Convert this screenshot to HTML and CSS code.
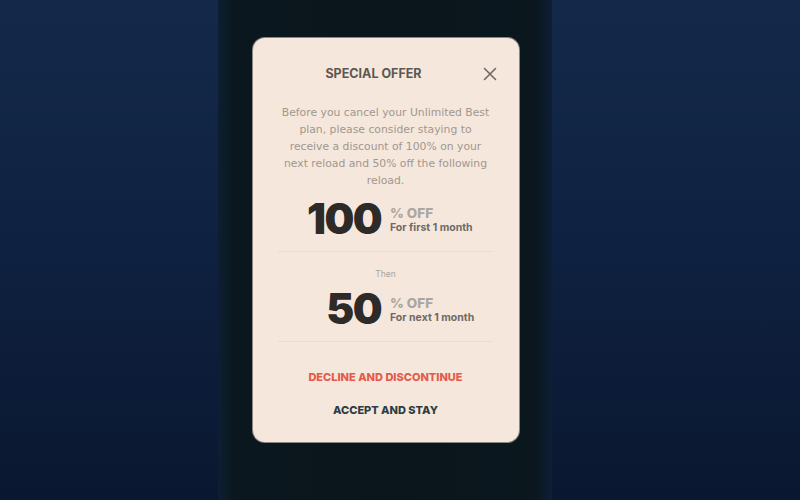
FILE: index.html
```html
<!DOCTYPE html>
<html lang="en">
<head>
    <meta charset="UTF-8">
    <meta name="viewport" content="width=device-width, initial-scale=1.0">
    <title>Special Offer</title>

    <link rel="stylesheet" href="styles.css">
</head>
<body>

    <div class="tela">

        <div class="oferta">

            <header class="topo">
                <h1>SPECIAL OFFER</h1>
                <button class="fechar" aria-label="Fechar">
                    <svg width="14" height="14" viewBox="0 0 14 14">
                        <path d="M1.5 1.5 L12.5 12.5 M12.5 1.5 L1.5 12.5" stroke="#6f6964" stroke-width="1.6" stroke-linecap="round"/>
                    </svg>
                </button>
            </header>

            <p class="texto">Before you cancel your Unlimited Best plan, please consider staying to<br>receive a discount of 100% on your next reload and 50% off the following reload.</p>

            <div class="desconto">
                <span class="numero">100</span>
                <div class="detalhe">
                    <span class="off">% OFF</span>
                    <span class="prazo">For first 1 month</span>
                </div>
            </div>

            <hr>

            <p class="then">Then</p>

            <div class="desconto">
                <span class="numero">50</span>
                <div class="detalhe">
                    <span class="off">% OFF</span>
                    <span class="prazo">For next 1 month</span>
                </div>
            </div>

            <hr>

            <div class="acoes">
                <button class="recusar">DECLINE AND DISCONTINUE</button>
                <button class="aceitar">ACCEPT AND STAY</button>
            </div>

        </div>
    </div>

</body>
</html>
```

FILE: styles.css
```css
body{
  margin: 0;
  height: 500px;
  overflow: hidden;
  font-family: 'Inter', 'Open Sans', sans-serif;
  background: linear-gradient(180deg, #14294a 0%, #0f2140 50%, #0a1730 100%);
}

/* coluna escura do celular atras do modal */
.tela{
  margin-left: 218px;
  width: 334px;
  height: 500px;
  background: linear-gradient(90deg, #0e1e33 0%, #0a171e 5%, #0a161b 50%, #0a171e 95%, #0e1f36 100%);
  padding-top: 38px;
  box-sizing: border-box;
}

.oferta{
  margin-left: 35px;
  width: 266px;
  height: 404px;
  box-sizing: border-box;
  background: #f5e7db;
  border-radius: 12px;
  box-shadow: 0 0 0 1px #8a8682;
  padding: 25px 26px 0 25px;
  display: flex;
  flex-direction: column;
  align-items: center;
}

.topo{
  width: 100%;
  position: relative;
  display: flex;
  justify-content: center;
  padding-right: 24px;
  box-sizing: border-box;
}

h1{
  margin: 0;
  font-size: 12.5px;
  font-weight: 700;
  color: #5c5753;
  line-height: 22px;
}

.fechar{
  position: absolute;
  right: -4px;
  top: 4px;
  border: none;
  background: none;
  padding: 0;
  display: flex;
}

.texto{
  margin: 19px 0 0 0;
  font-size: 10.8px;
  line-height: 17px;
  color: #a1978f;
  text-align: center;
  font-family: 'DejaVu Sans', sans-serif;
}

.desconto{
  display: flex;
  align-items: center;
  gap: 9px;
  margin-left: 18px;
}

.oferta > .desconto:nth-of-type(1){
  margin-top: 7px;
}

/* numeros alinhados pela direita, como uma coluna */
.numero{
  width: 74px;
  text-align: right;
  font-size: 42px;
  font-weight: 900;
  color: #2d2a28;
  letter-spacing: -1.5px;
  line-height: 46px;
}

.detalhe{
  width: 92px;
  display: flex;
  flex-direction: column;
  padding-top: 2px;
}

.off{
  font-size: 13.5px;
  font-weight: 800;
  color: #aca6a1;
  line-height: 15px;
}

.prazo{
  font-size: 10.5px;
  font-weight: 700;
  color: #6e6a66;
  line-height: 14px;
}

hr{
  width: 100%;
  border: none;
  border-top: 1px solid #ecdcd0;
  margin: 9px 0 0 0;
}

.then{
  margin: 16px 0 6px 0;
  font-size: 8.5px;
  color: #aaa39d;
  line-height: 12px;
}

.acoes{
  display: flex;
  flex-direction: column;
  align-items: center;
  gap: 18px;
  margin-top: 28px;
}

.acoes button{
  border: none;
  background: none;
  padding: 0;
  font-family: 'Inter', sans-serif;
  font-size: 11px;
  font-weight: 800;
  line-height: 15px;
}

.recusar{
  color: #e35b4b;
}

.aceitar{
  color: #2d3c43;
}
```
